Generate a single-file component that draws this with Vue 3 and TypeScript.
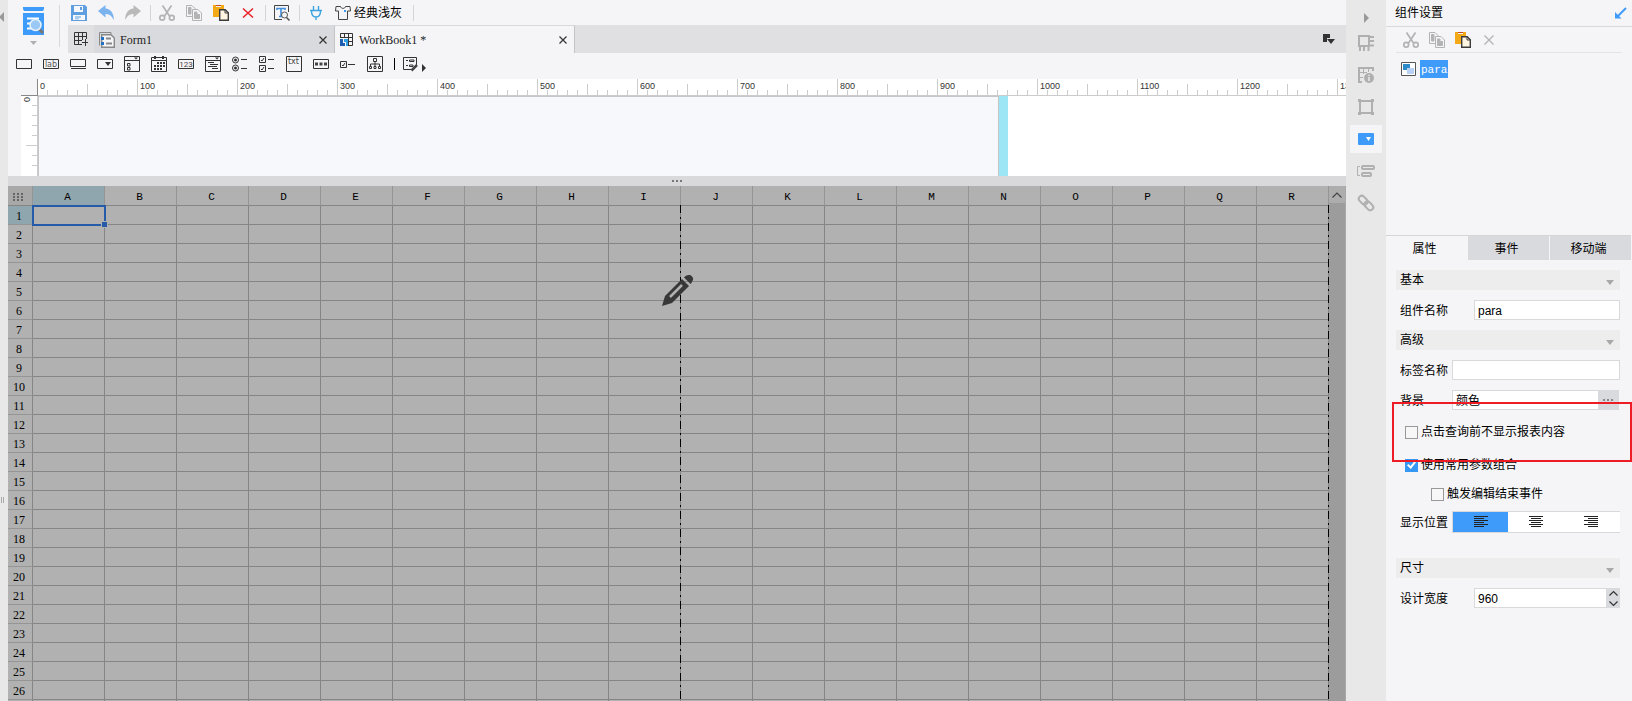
<script setup lang="ts">
import { ref } from 'vue'

interface Tool { name: string; art: string }

const cut = '<g fill="none" stroke="#b3b3b3" stroke-width="1.7"><path d="M3.5 0.5 L10.5 11M12.5 0.5 L5.5 11"/><circle cx="3.2" cy="12.8" r="2.4"/><circle cx="12.8" cy="12.8" r="2.4"/></g>'
const copy = '<g fill="#f5f5f7" stroke="#b3b3b3"><path d="M.5.5H6L9.5 4V11.5H.5Z"/><path d="M2.5 2.5H5V9H2.5Z" fill="#b3b3b3"/><path d="M6.5 4.5H12L15.5 8V15.5H6.5Z"/><path d="M8.5 7H11V9.5H13.5V13.5H8.5Z" fill="#b3b3b3"/></g>'
const paste = '<path d="M0 0H3V2H8V0H11V12H0Z" fill="#f2a915"/><path d="M3 0H8V1H3Z" fill="#c4481f"/><path d="M6.7 4.7H12.2L15.3 7.8V15.3H6.7Z" fill="#fff5e0" stroke="#3c3c3c" stroke-width="1.4"/><path d="M12 4.5V8H15.5" fill="none" stroke="#3c3c3c"/>'

const fileTools: Tool[] = [
  { name: '保存', art: '<path d="M0 0H14L16 2V16H0Z" fill="#5f9fdf"/><path d="M3 1H12V7H3Z M2 10H14V15H2Z" fill="#f5f7fa"/><path d="M9 2H11V5H9Z M4 11.5H10V12.5H4Z M4 13.5H8V14.2H4Z" fill="#5f9fdf"/>' },
  { name: '撤销', art: '<path d="M0 6L7.5 0V3.5C12.5 4 16 8 15.8 15C13.5 10.5 11 9 7.5 9V12.5Z" fill="#7bb3ef"/>' },
  { name: '重做', art: '<path d="M16 6L8.5 0V3.5C3.5 4 0 8 .2 15C2.5 10.5 5 9 8.5 9V12.5Z" fill="#b9b9b9"/>' }
]
const editTools: Tool[] = [
  { name: '剪切', art: cut },
  { name: '复制', art: copy },
  { name: '粘贴', art: paste },
  { name: '删除', art: '<path d="M3 3.5L13 12.5M13 3.5L3 12.5" stroke="#e8262b" stroke-width="1.6"/>' }
]
const panelTools: Tool[] = [
  { name: '剪切组件', art: cut },
  { name: '复制组件', art: copy },
  { name: '粘贴组件', art: paste },
  { name: '删除组件', art: '<path d="M3.5 3.5L12.5 12.5M12.5 3.5L3.5 12.5" stroke="#b3b3b3" stroke-width="1.3"/>' }
]

const box = '<path d="M.5 .5H15.5V15.5H.5Z" fill="none" stroke="#333"/>'
const wide = '<path d="M.5 3.5H15.5V12.5H.5Z" fill="none" stroke="#333"/>'
const widgets: Tool[] = [
  { name: '文本', art: wide },
  { name: '标签', art: wide + '<text x="8" y="11" font-size="8" text-anchor="middle" fill="#555" font-family="DejaVu Sans, sans-serif">lab</text>' },
  { name: '按钮', art: '<path d="M.5 3.5H15.5V10.5H.5Z M1 12.5H16" fill="none" stroke="#333"/>' },
  { name: '下拉框', art: wide + '<path d="M8 6H14L11 10Z" fill="#333"/>' },
  { name: '下拉复选框', art: box + '<path d="M0 4.5H16M3.5 7.5H6V10H3.5ZM3.5 11.5H6V14H3.5Z" fill="none" stroke="#333"/><path d="M10 1.5H14L12 3.5Z" fill="#333"/>' },
  { name: '日期', art: '<path d="M.5 1.5H15.5V15.5H.5Z M0 4.5H16" fill="none" stroke="#333"/><path d="M4 0V3M12 0V3" stroke="#333" stroke-width="2"/><path d="M6 7H14M3 10H14M3 13H11" stroke="#333" stroke-width="2" stroke-dasharray="2 1"/>' },
  { name: '数字', art: wide + '<text x="8" y="11" font-size="8" text-anchor="middle" fill="#444" font-family="Roboto, sans-serif">123</text>' },
  { name: '树', art: box + '<path d="M0 4.5H16M3 6.5H9M5 8.5H13M3 10.5H12M7 12.5H13" stroke="#333"/><path d="M10 1.5H14L12 3.5Z" fill="#333"/>' },
  { name: '单选按钮组', art: '<g fill="none" stroke="#333"><circle cx="3.5" cy="4" r="3"/><circle cx="3.5" cy="12" r="3"/><path d="M9 3.5H15M9 12.5H15"/></g><circle cx="3.5" cy="4" r="1.5" fill="#333"/><circle cx="3.5" cy="12" r="1.5" fill="#333"/>' },
  { name: '复选框组', art: '<path d="M.5 .5H6.5V6.5H.5ZM.5 9.5H6.5V15.5H.5ZM9 3.5H15M9 12.5H15M2 4L3 5L5 2M2 13L3 14L5 11" fill="none" stroke="#333"/>' },
  { name: '文本域', art: box + '<text x="7.5" y="8" font-size="8" text-anchor="middle" fill="#444" font-family="DejaVu Sans, sans-serif">txt</text>' },
  { name: '密码', art: wide + '<path d="M2 8H14" stroke="#444" stroke-width="3" stroke-dasharray="3 1.5"/>' },
  { name: '复选框', art: '<path d="M.5 5.5H6.5V11.5H.5ZM8 8.5H15M2 9L3 10L5 7" fill="none" stroke="#333"/>' },
  { name: '视图树', art: box + '<path d="M6.5 2.5H9.5V5.5H6.5ZM2.5 10.5H4.5V12.5H2.5ZM7 10.5H9V12.5H7ZM11.5 10.5H13.5V12.5H11.5ZM8 6V10M3.5 10V8H12.5V10" fill="none" stroke="#333"/>' }
]

const dockIcons: Tool[] = [
  { name: '单元格元素', art: '<path d="M1 1H11V11H1Z M11 2H16M11 6H16M11 10.5H16M2 11V16M6 11V16M10.5 11V16" fill="none" stroke="#b0b0b0" stroke-width="2"/>' },
  { name: '单元格属性', art: '<path d="M4 15H1V1H15V4" fill="none" stroke="#b0b0b0" stroke-width="2"/><path d="M5.5 2V7M10.5 2V5M2 10.5H5M2 5.5H9" fill="none" stroke="#b0b0b0"/><circle cx="11" cy="11" r="5" fill="#b0b0b0"/><path d="M10.2 7.7H11.8V9H10.2ZM10.2 10H11.8V14H10.2Z" fill="#e8e8e8"/>' },
  { name: '悬浮元素', art: '<path d="M2 2H14V14H2Z" fill="none" stroke="#b0b0b0" stroke-width="2"/><path d="M0 0H3V3H0ZM13 0H16V3H13ZM0 13H3V16H0ZM13 13H16V16H13Z" fill="#b0b0b0"/>' },
  { name: '控件设置', art: '<rect y="2" width="16" height="12" rx="1" fill="#3f9bfa"/><path d="M8 6H13L10.5 10Z" fill="#fff"/>' },
  { name: '条件属性', art: '<path d="M2 3.5H-.5V12.5H2" fill="none" stroke="#b0b0b0"/><rect x="4" y="3" width="12" height="3" rx="1" fill="none" stroke="#b0b0b0" stroke-width="2"/><rect x="4" y="10" width="9" height="3" rx="1" fill="none" stroke="#b0b0b0" stroke-width="2"/>' },
  { name: '超级链接', art: '<g fill="none" stroke="#b0b0b0" stroke-width="2" transform="rotate(45 8 8)"><rect x="-1" y="5" width="10" height="6" rx="3"/><rect x="7" y="5" width="10" height="6" rx="3"/></g>' }
]

const ticks = Array.from({ length: 180 }, (_, i) => (i + 1) * 10)
const marks = Array.from({ length: 14 }, (_, i) => i * 100)
const sideTicks = [10, 20, 30, 40, 50, 60, 70]
const columns = 'ABCDEFGHIJKLMNOPQR'.split('')

const componentName = ref('para')
const labelName = ref('')
const background = ref('颜色')
const hideBeforeQuery = ref(false)
const useCommon = ref(true)
const fireEditEnd = ref(false)
const designWidth = ref('960')
const propertyTabs = ['属性', '事件', '移动端']
const activeTab = ref('属性')
const aligns = [
  { name: '左', d: 'M0 .5H14M0 2.5H10M0 4.5H14M0 6.5H10M0 8.5H14M0 10.5H10' },
  { name: '中', d: 'M0 .5H14M2 2.5H12M0 4.5H14M2 6.5H12M0 8.5H14M2 10.5H12' },
  { name: '右', d: 'M0 .5H14M4 2.5H14M0 4.5H14M4 6.5H14M0 8.5H14M4 10.5H14' }
]
const align = ref('左')
</script>

<template>
  <div class="designer">
    <aside class="edge">
      <svg class="edge-arrow" width="5" height="10"><path d="M5 0V10L0 5Z" fill="#999" /></svg>
      <svg class="edge-grip" width="4" height="6"><path d="M.5 0V6M2.5 0V6" stroke="#aaa" /></svg>
    </aside>

    <main class="work">
      <header class="top">
        <button class="preview" aria-label="预览">
          <svg width="21" height="40" viewBox="0 0 21 40">
            <path d="M0 1H21V3L20 5H1L0 3ZM0 7H21V29H0Z" fill="#3f9bfa" />
            <path d="M4 12.500H16M4 17.500H8M4 22.500H8" stroke="#fff" stroke-width="2" />
            <path d="M16 23L20 27" stroke="#777" stroke-width="3" />
            <circle cx="12.500" cy="19" r="5.500" fill="#9cc8f5" stroke="#e8f2fc" stroke-width="1.500" />
            <path d="M7 35H14L10.500 39Z" fill="#b0b0b0" />
          </svg>
        </button>
        <div class="bars">
          <div class="tools" role="toolbar" aria-label="文件">
            <button v-for="t in fileTools" :key="t.name" class="tool" :aria-label="t.name"><svg width="16" height="16" v-html="t.art" /></button>
            <i class="sep" />
            <button v-for="t in editTools" :key="t.name" class="tool" :aria-label="t.name"><svg width="16" height="16" v-html="t.art" /></button>
            <i class="sep" />
            <button class="tool" aria-label="查找">
              <svg width="16" height="16">
                <path d="M8 14.500H.5V.5H14.500V7" fill="none" stroke="#444" />
                <path d="M3 5V3.500H11V5M7 3V11M5 11.500H9" fill="none" stroke="#3f8fe0" stroke-width="1.600" />
                <circle cx="10.500" cy="10" r="3" fill="#f5f5f7" stroke="#555" /><path d="M12.500 12.500L15.500 15.500" stroke="#555" stroke-width="1.600" />
              </svg>
            </button>
            <i class="sep" />
            <button class="tool" aria-label="连接">
              <svg width="16" height="16"><path d="M5.500 1V5M10.500 1V5M2 5.500H14M3.500 6C3.500 10 5 12 8 12S12.500 10 12.500 6M8 12V15" fill="none" stroke="#3ba3e0" stroke-width="1.400" /></svg>
            </button>
            <button class="tool theme">
              <svg width="16" height="16"><path d="M1 1.500H5.500C6 4 10 4 10.500 1.500H15L15.500 6H12.500V14.500H3.500V6H.5Z" fill="none" stroke="#444" /><path d="M9 5H11V7H9Z" fill="#3f9bfa" /></svg>
              <span>经典浅灰</span>
            </button>
            <i class="sep" />
          </div>
          <nav class="tabs">
            <button class="add" aria-label="新建">
              <svg width="14" height="14"><path d="M8 12.500H.5V.5H12.500V7M0 4.500H13M0 8.500H8M4.500 0V13M8.500 0V8M11.500 7V14M8 10.500H14" fill="none" stroke="#333" /></svg>
            </button>
            <div class="tab">
              <svg width="16" height="16"><path d="M.5 13.500V.5H12V2" fill="none" stroke="#888" /><path d="M2.700 2.700H12L15.300 6V15.300H2.700Z" fill="#f5f5f7" stroke="#888" stroke-width="1.400" /><path d="M2 5H5V8H2ZM2 10H5V13H2Z" fill="#2370c0" /><path d="M7 6.500H12M7 11.500H13" stroke="#888" stroke-width="2" /></svg>
              <span>Form1</span>
              <button class="close" aria-label="关闭 Form1"><svg width="8" height="8"><path d="M.5 .5L7.500 7.500M7.500 .5L.5 7.500" stroke="#333" stroke-width="1.200" /></svg></button>
            </div>
            <div class="tab active">
              <svg width="14" height="14"><path d="M.5 5V.5H12.500V12.500H8M0 4.500H13M4.500 0V5M8.500 0V13M9 8.500H13" fill="none" stroke="#333" /><path d="M0 6H3V10H5V13H0Z" fill="#1d5fae" /><path d="M4 6H8V13H6V9H4Z" fill="#2fa0e6" /></svg>
              <span>WorkBook1 *</span>
              <button class="close" aria-label="关闭 WorkBook1"><svg width="8" height="8"><path d="M.5 .5L7.500 7.500M7.500 .5L.5 7.500" stroke="#333" stroke-width="1.200" /></svg></button>
            </div>
            <button class="list" aria-label="标签列表"><svg width="12" height="10"><path d="M0 0H7V4H4V8H0Z M4 5H12L8 10Z" fill="#333" /></svg></button>
          </nav>
        </div>
      </header>

      <div class="widgets" role="toolbar" aria-label="控件">
        <button v-for="w in widgets" :key="w.name" class="tool" :aria-label="w.name"><svg width="16" height="16" v-html="w.art" /></button>
        <i class="bar" />
        <button class="tool more" aria-label="更多控件">
          <svg width="24" height="16"><path d="M9 13.500H.5V1.500H13.500V9M3 4.500H5M3 9.500H5M6.500 4H11V5.500H6.500ZM6.500 9H10V10.500H6.500Z" fill="none" stroke="#333" /><path d="M8.500 14.500L14 9" stroke="#444" stroke-width="2.500" /><path d="M19 8V16L23 12Z" fill="#333" /></svg>
        </button>
      </div>

      <section class="stage">
        <svg class="ruler" height="17" shape-rendering="crispEdges">
          <path d="M.5 0V17" stroke="#888" />
          <path v-for="x in ticks" :key="x" :d="`M${x}.5 ${x % 100 === 0 ? 0 : x % 50 === 0 ? 5 : 11}V16`" stroke="#ccc" />
          <text v-for="m in marks" :key="m" :x="m + 3" y="10">{{ m }}</text>
          <rect y="16" width="100%" height="1" fill="#ccc" />
        </svg>
        <svg class="side-ruler" width="17" height="81" shape-rendering="crispEdges">
          <path d="M0 .5H17" stroke="#888" />
          <path v-for="y in sideTicks" :key="y" :d="`M${y === 50 ? 5 : 11} ${y}.5H16`" stroke="#ccc" />
          <path d="M16.500 1V81" stroke="#ccc" />
          <text transform="translate(9 7) rotate(-90)" x="0" y="0">0</text>
        </svg>
        <div class="canvas"><div class="pane" /><div class="grip" /></div>
      </section>

      <div class="splitter"><svg width="10" height="2"><path d="M0 0H2V2H0ZM4 0H6V2H4ZM8 0H10V2H8Z" fill="#777" /></svg></div>

      <section class="sheet">
        <div class="cells">
          <table>
            <colgroup><col class="index"><col v-for="c in columns" :key="c"></colgroup>
            <thead>
              <tr>
                <th class="corner"><svg width="10" height="8"><path d="M0 1H10M0 4H10M0 7H10" stroke="#666" stroke-width="2" stroke-dasharray="2 2" /></svg></th>
                <th v-for="c in columns" :key="c" :class="{ hit: c === 'A' }">{{ c }}</th>
              </tr>
            </thead>
            <tbody>
              <tr v-for="r in 27" :key="r">
                <th :class="{ hit: r === 1 }">{{ r }}</th>
                <td v-for="c in columns" :key="c"><span v-if="r === 1 && c === 'A'" class="cursor" /></td>
              </tr>
            </tbody>
          </table>
          <i class="page middle" />
          <i class="page last" />
          <svg class="pencil" width="32" height="32" viewBox="0 0 32 32">
            <path d="M0 31L3 21L20 4L27 11L10 28Z" fill="#383838" /><path d="M8 22L20 10" stroke="#b1b1b1" stroke-width="2.500" />
            <path d="M22 2.500C25-.5 28-.5 30 1.500S31 6 28.500 9Z" fill="#383838" />
          </svg>
        </div>
        <div class="scroll"><button aria-label="向上滚动"><svg width="10" height="6"><path d="M.5 5.500L5 1L9.500 5.500" fill="none" stroke="#444" stroke-width="1.200" /></svg></button></div>
      </section>
    </main>

    <nav class="dock">
      <button class="fold" aria-label="折叠"><svg width="5" height="10"><path d="M0 0V10L5 5Z" fill="#999" /></svg></button>
      <button v-for="(d, i) in dockIcons" :key="d.name" :class="['dock-item', { on: i === 3 }]" :aria-label="d.name"><svg width="16" height="16" v-html="d.art" /></button>
    </nav>

    <aside class="panel">
      <header class="title">
        <span>组件设置</span>
        <button aria-label="弹出"><svg width="12" height="12"><path d="M11 1L2 10" stroke="#3f9bfa" stroke-width="2" /><path d="M0 5V11.500H6.500Z" fill="#3f9bfa" /></svg></button>
      </header>
      <div class="panel-tools" role="toolbar" aria-label="组件">
        <button v-for="t in panelTools" :key="t.name" class="tool" :aria-label="t.name"><svg width="16" height="16" v-html="t.art" /></button>
      </div>
      <div class="tree">
        <button class="node">
          <svg width="15" height="14"><path d="M.5 .5H14.500V13.500H.5Z" fill="#fff" stroke="#555" /><path d="M2 2H9V8H2Z" fill="#2d8ac8" /><path d="M6 6H13V12H6Z" fill="#b9d0f5" /></svg>
          <span>para</span>
        </button>
      </div>
      <div class="property-tabs">
        <button v-for="p in propertyTabs" :key="p" :class="{ on: activeTab === p }" @click="activeTab = p">{{ p }}</button>
      </div>
      <form class="form" @submit.prevent>
        <h3>基本<i /></h3>
        <div class="row far"><label for="cname">组件名称</label><input id="cname" v-model="componentName" class="box"></div>
        <h3>高级<i /></h3>
        <div class="row"><label for="lname">标签名称</label><input id="lname" v-model="labelName" class="box"></div>
        <div class="row"><label for="bg">背景</label><input id="bg" v-model="background" class="box joined" readonly><button class="dots" aria-label="选择背景"><svg width="11" height="2"><path d="M0 0H2V2H0ZM4 0H6V2H4ZM8 0H10V2H8Z" fill="#888" /></svg></button></div>
        <div class="options">
          <label class="check"><input v-model="hideBeforeQuery" type="checkbox">点击查询前不显示报表内容</label>
          <label class="check"><input v-model="useCommon" type="checkbox">使用常用参数组合</label>
          <label class="check nested"><input v-model="fireEditEnd" type="checkbox">触发编辑结束事件</label>
          <div class="row">
            <span class="caption">显示位置</span>
            <div class="segments">
              <button v-for="a in aligns" :key="a.name" :class="{ on: align === a.name }" :aria-label="a.name" @click="align = a.name"><svg width="14" height="12" shape-rendering="crispEdges"><path :d="a.d" stroke="#222" /></svg></button>
            </div>
          </div>
        </div>
        <h3 class="size">尺寸<i /></h3>
        <div class="row far">
          <label for="dw">设计宽度</label><input id="dw" v-model="designWidth" class="box joined">
          <div class="spin">
            <button aria-label="增加"><svg width="9" height="5"><path d="M.5 4.500L4.500 .5L8.500 4.500" fill="none" stroke="#333" stroke-width="1.200" /></svg></button>
            <button aria-label="减少"><svg width="9" height="5"><path d="M.5 .5L4.500 4.500L8.500 .5" fill="none" stroke="#333" stroke-width="1.200" /></svg></button>
          </div>
        </div>
      </form>
      <div class="highlight" />
    </aside>
  </div>
</template>

<style>
body { margin: 0; }
</style>

<style scoped>
.designer { display: flex; height: 100vh; overflow: hidden; background: #f5f5f7; color: #000; font: 12px/16px "Liberation Sans", "Noto Sans CJK SC", sans-serif; }
.designer * { box-sizing: border-box; }
button { display: flex; align-items: center; justify-content: center; padding: 0; border: 0; background: none; color: inherit; font: inherit; }
svg { display: block; flex: none; overflow: visible; }
.edge { flex: none; width: 8px; display: flex; flex-direction: column; justify-content: space-between; padding: 12px 0 198px; background: #e8e8e8; }
.edge-arrow { margin-left: -1px; }
.edge-grip { margin-left: 1px; }
.work { flex: 1; min-width: 0; display: flex; flex-direction: column; }
.top { display: flex; height: 53px; }
.preview { width: 52px; height: 42px; margin: 5px 0; border-right: 1px solid #d9d9db; flex: none; }
.bars { flex: 1; margin-left: 8px; min-width: 0; }
.tools { display: flex; align-items: center; height: 25px; padding-left: 3px; }
.tool { flex: none; margin-right: 11px; height: 16px; }
.theme { gap: 3px; white-space: nowrap; }
.sep { width: 1px; height: 16px; margin: 0 8px 0 -2px; background: #d5d5d7; }
.theme + .sep { margin-left: 0; }
.tabs { display: flex; height: 28px; background: #e0e0e2; font-family: "Liberation Serif", serif; color: #222; }
.add { width: 26px; }
.tab { display: flex; align-items: center; gap: 5px; width: 240px; padding: 0 7px 0 5px; background: #d9dadd; border-top: 1px solid #d9d9db; }
.tab.active { width: 241px; background: #f5f5f7; border-left: 1px solid #c4c4c6; border-right: 1px solid #c4c4c6; }
.close { margin-left: auto; }
.list { margin: 0 11px 0 auto; }
.widgets { display: flex; align-items: center; height: 26px; padding: 0 8px 4px; }
.bar { width: 1px; height: 12px; margin-right: 8px; background: #000; }
.stage { display: grid; grid-template-columns: 16px 1fr; grid-template-rows: 16px 81px; padding-left: 13px; }
.ruler { grid-column: 2; width: 100%; background: #fff; overflow: hidden; }
.side-ruler { grid-column: 1; grid-row: 2; background: #fff; z-index: 1; }
.ruler text, .side-ruler text { font-size: 9px; fill: #333; }
.canvas { grid-column: 2; grid-row: 2; margin: 1px 0 0 1px; display: flex; background: #fff; }
.pane { width: 961px; background: #f6f8fb; border: 1px solid #c6c6c8; border-bottom: 0; }
.grip { width: 9px; background: #9ce6f5; }
.splitter { display: flex; align-items: center; justify-content: center; height: 10px; flex: none; background: #d9d9db; }
.sheet { flex: 1; min-height: 0; display: flex; overflow: hidden; background: #b1b1b1; }
.cells { flex: 1; min-width: 0; position: relative; overflow: hidden; }
table { width: 100%; table-layout: fixed; border-collapse: separate; border-spacing: 0; }
.index { width: 25px; }
th, td { position: relative; height: 19px; padding: 0; border-right: 1px solid #858585; border-bottom: 1px solid #858585; font-weight: 400; }
thead th { height: 20px; padding: 3px 2px 0 0; border-right-color: #959595; font: 11px/16px "Liberation Mono", monospace; }
thead th.corner { background: #a8a8a8; padding-right: 4px; }
.corner svg { margin: 0 auto; }
tbody th { padding: 2px 2px 0 0; border-bottom-color: #959595; font: 12px/16px "Liberation Serif", serif; }
th.hit { background: #90a6ae; }
.cursor { position: absolute; inset: -1px -2px -2px -1px; border: 2px solid #245aa8; z-index: 1; }
.cursor::after { content: ""; position: absolute; right: -3px; bottom: -3px; width: 5px; height: 5px; background: #245aa8; outline: 1px solid #b1b1b1; }
.page { position: absolute; top: 19px; bottom: 0; width: 1px; background: repeating-linear-gradient(#000 0 8px, transparent 8px 12px, #000 12px 14px, transparent 14px 18px); }
.middle { left: calc(11px + 50%); }
.last { right: 0; }
.pencil { position: absolute; left: calc(50% - 7px); top: 89px; }
.scroll { width: 17px; background: #9c9c9c; border-right: 1px solid #a8a8a8; }
.scroll button { width: 100%; height: 17px; background: #adadad; }
.dock { flex: none; width: 40px; display: flex; flex-direction: column; align-items: center; gap: 4px; padding-top: 10px; background: #e8e8e8; }
.fold { height: 15px; width: 32px; }
.dock-item { width: 32px; height: 28px; }
.dock-item.on { background: #f5f5f7; }
.panel { position: relative; flex: none; width: 246px; }
.title { display: flex; align-items: center; justify-content: space-between; height: 27px; padding: 0 5px 0 9px; border-bottom: 1px solid #d9d9db; }
.panel-tools { display: flex; align-items: center; height: 26px; margin: 0 10px; padding-left: 7px; border-bottom: 1px solid #e4e4e6; }
.panel-tools .tool { margin-right: 10px; }
.tree { height: 182px; padding: 7px 15px; }
.node { gap: 4px; }
.node span { height: 18px; padding: 0 1px; line-height: 20px; background: #3f9bfa; color: #fff; font-family: "Liberation Mono", monospace; font-size: 11px; }
.property-tabs { display: grid; grid-template-columns: 1fr 1fr 1fr; gap: 1px; height: 25px; margin-right: 1px; border-top: 1px solid #d5d5d7; }
.property-tabs button { padding: 2px 4px 0 0; background: #d9dadd; }
.property-tabs .on { background: #f5f5f7; }
.form { display: flex; flex-direction: column; gap: 10px; padding: 10px 12px 10px 10px; }
h3 { display: flex; align-items: center; justify-content: space-between; height: 20px; margin: 0; padding: 0 6px 0 4px; background: #ededed; font: inherit; }
h3 i { margin-top: 4px; border: 4px solid transparent; border-top: 5px solid #a8a8a8; border-bottom: 0; }
.size { margin-top: 15px; }
.row { display: flex; height: 20px; line-height: 22px; }
.row > label, .caption { flex: none; width: 56px; padding-left: 4px; white-space: nowrap; }
.far > label { width: 78px; }
.box { flex: 1; min-width: 0; height: 20px; padding: 1px 3px 0; border: 1px solid #d9d9db; border-radius: 0; background: #fff; color: #000; font: inherit; outline: 0; }
.joined { border-right: 0; }
.dots { width: 21px; margin-right: 1px; background: #d9dadd; }
.options { display: flex; flex-direction: column; gap: 9px; }
.check { display: flex; align-items: center; gap: 3px; height: 24px; padding-left: 9px; white-space: nowrap; }
.nested { height: 16px; padding-left: 35px; }
.check input { appearance: none; position: relative; flex: none; width: 13px; height: 13px; margin: 0; border: 1px solid #999; background: #f7f7f8; }
.check input:checked { border-color: #3797f5; background: #3797f5; }
.check input:checked::after { content: ""; position: absolute; left: 3px; top: 0; width: 3px; height: 6px; border: solid #fff; border-width: 0 2px 2px 0; transform: rotate(40deg); box-sizing: content-box; }
.options .row { height: 22px; line-height: 24px; }
.segments { flex: 1; display: flex; padding-right: 2px; border: 1px solid #d9d9db; border-right: 0; background: #fff; }
.segments button { flex: 1; }
.segments .on { background: #3f9bfa; }
.spin { width: 14px; display: flex; flex-direction: column; background: #d9dadd; }
.spin button { flex: 1; }
.highlight { position: absolute; left: 6px; right: 0; top: 402px; height: 60px; border: 2px solid #ee1c25; pointer-events: none; }
</style>
